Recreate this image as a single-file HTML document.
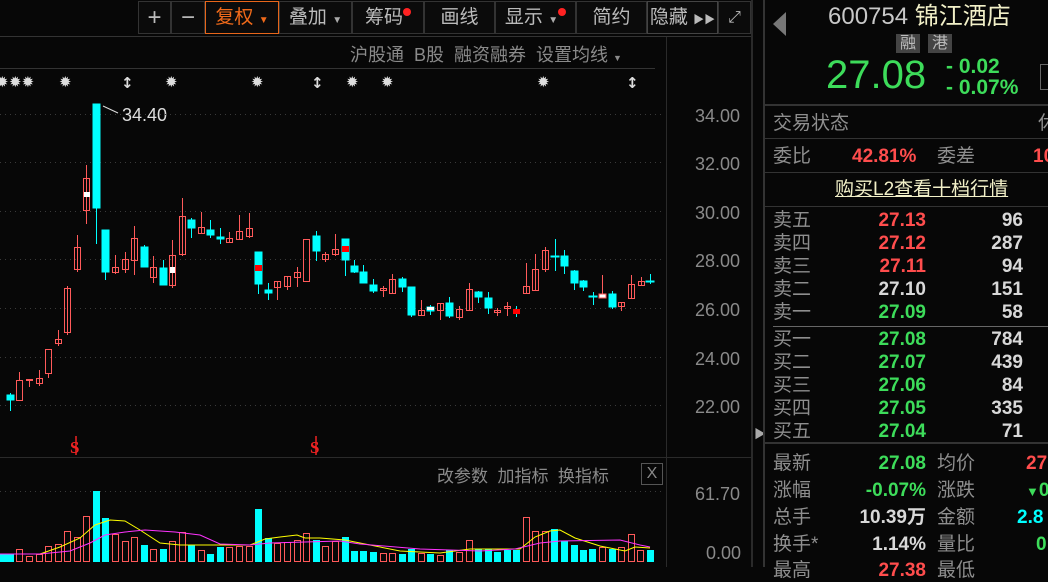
<!DOCTYPE html>
<html><head><meta charset="utf-8"><style>
*{margin:0;padding:0;box-sizing:border-box}
body{width:1048px;height:567px;background:#070707;overflow:hidden;position:relative;font-family:"Liberation Sans","Noto Sans CJK SC",sans-serif;color:#999}
.a{position:absolute;white-space:nowrap}
.btn{position:absolute;top:1px;height:33px;border:1px solid #333;color:#bbb;font-size:19px;line-height:31px;text-align:center;background:#0b0b0b}
.rt{position:absolute;white-space:nowrap;font-size:19px;line-height:22px}
.lab{color:#8e8e8e}
.num{font-weight:bold;text-align:right}
.g{color:#3ddc5a}.r{color:#ff4d4d}.w{color:#d8d8d8}
.hl{position:absolute;left:765px;width:283px;height:2px;background:#333}
</style></head><body>
<div class="btn" style="left:138px;width:33px;font-size:24px">+</div>
<div class="btn" style="left:171px;width:34px;font-size:24px">−</div>
<div class="btn" style="left:205px;width:74px;border-color:#e8661a;color:#f06a1a">复权 <span style="font-size:10px">▼</span></div>
<div class="btn" style="left:279px;width:73px">叠加 <span style="font-size:10px;color:#aaa">▼</span></div>
<div class="btn" style="left:352px;width:72px">筹码<span style="display:inline-block;width:8px;height:8px;border-radius:4px;background:#f22;vertical-align:top;margin-top:6px"></span></div>
<div class="btn" style="left:424px;width:71px">画线</div>
<div class="btn" style="left:495px;width:81px">显示 <span style="font-size:10px;color:#aaa">▼</span><span style="display:inline-block;width:8px;height:8px;border-radius:4px;background:#f22;vertical-align:top;margin-top:6px"></span></div>
<div class="btn" style="left:576px;width:71px">简约</div>
<div class="btn" style="left:647px;width:71px;border-color:#444">隐藏 <span style="font-size:11px">▶▶</span></div>
<div class="btn" style="left:718px;width:33px;font-size:16px">⤢</div>
<div class="a" style="left:0;top:36px;width:752px;height:1px;background:#333"></div>
<div class="a" style="left:350px;top:41px;font-size:18px;color:#8a8a8a">沪股通&nbsp;&nbsp;B股&nbsp;&nbsp;融资融券&nbsp;&nbsp;设置均线 <span style="font-size:9px">▼</span></div>
<div class="a" style="left:0;top:68px;width:655px;height:1px;background:#333"></div>
<div class="a" style="left:666px;top:37px;width:1px;height:530px;background:#2a2a2a"></div>
<div class="a" style="left:751px;top:0;width:2px;height:567px;background:#2a2a2a"></div>
<div class="a" style="left:754px;top:425px;color:#aaa;font-size:12px">▶</div>
<div class="a" style="left:0;top:457px;width:752px;height:1px;background:#2a2a2a"></div>
<div class="a" style="left:695px;top:105px;font-size:18px;color:#8a8a8a;line-height:22px">34.00</div>
<div class="a" style="left:695px;top:153px;font-size:18px;color:#8a8a8a;line-height:22px">32.00</div>
<div class="a" style="left:695px;top:202px;font-size:18px;color:#8a8a8a;line-height:22px">30.00</div>
<div class="a" style="left:695px;top:250px;font-size:18px;color:#8a8a8a;line-height:22px">28.00</div>
<div class="a" style="left:695px;top:299px;font-size:18px;color:#8a8a8a;line-height:22px">26.00</div>
<div class="a" style="left:695px;top:348px;font-size:18px;color:#8a8a8a;line-height:22px">24.00</div>
<div class="a" style="left:695px;top:396px;font-size:18px;color:#8a8a8a;line-height:22px">22.00</div>
<div class="a" style="left:695px;top:483px;font-size:18px;color:#8a8a8a;line-height:22px">61.70</div>
<div class="a" style="left:706px;top:542px;font-size:18px;color:#8a8a8a;line-height:22px">0.00</div>
<div class="a" style="left:122px;top:104px;font-size:18px;color:#ddd;line-height:22px">34.40</div>
<div class="a" style="left:437px;top:462px;font-size:17px;color:#8a8a8a">改参数&nbsp;&nbsp;加指标&nbsp;&nbsp;换指标</div>
<div class="a" style="left:641px;top:463px;width:22px;height:22px;border:1px solid #555;color:#888;font-size:16px;text-align:center;line-height:20px">X</div>
<svg class="a" style="left:0;top:0" width="752" height="567">
<g stroke="#3a3a3a" stroke-dasharray="1 4">
<line x1="0" y1="114.5" x2="665" y2="114.5"/><line x1="0" y1="162.5" x2="665" y2="162.5"/><line x1="0" y1="211.5" x2="665" y2="211.5"/><line x1="0" y1="259.5" x2="665" y2="259.5"/><line x1="0" y1="308.5" x2="665" y2="308.5"/><line x1="0" y1="357.5" x2="665" y2="357.5"/><line x1="0" y1="405.5" x2="665" y2="405.5"/><line x1="0" y1="491.5" x2="665" y2="491.5"/>
</g>
<g fill="#ddd" font-size="15" font-family="DejaVu Sans" font-weight="bold">
<text x="-4" y="87">✹</text><text x="9" y="87">✹✹</text><text x="59" y="87">✹</text><text x="165" y="87">✹</text><text x="251" y="87">✹</text><text x="346" y="87">✹</text><text x="381" y="87">✹</text><text x="537" y="87">✹</text>
<text x="121" y="88">↕</text><text x="311" y="88">↕</text><text x="626" y="88">↕</text>
</g>
<g fill="#e22" font-size="17" font-weight="bold" font-family="Liberation Serif"><text x="70" y="453">S</text><text x="310" y="453">S</text></g>
<g stroke="#e22" stroke-width="1.5"><line x1="76" y1="436" x2="76" y2="455"/><line x1="316" y1="436" x2="316" y2="455"/></g>
<line x1="103" y1="106" x2="118" y2="113" stroke="#ddd"/>
<g stroke="#00ffff" fill="#00ffff">
<line x1="10.5" y1="393" x2="10.5" y2="411"/><rect x="7" y="395" width="7" height="5"/>
<line x1="96.5" y1="104" x2="96.5" y2="244"/><rect x="93" y="104" width="7" height="104"/>
<line x1="105.5" y1="230" x2="105.5" y2="280"/><rect x="102" y="230" width="7" height="42"/>
<line x1="144.5" y1="245" x2="144.5" y2="267"/><rect x="141" y="247" width="7" height="20"/>
<line x1="163.5" y1="260" x2="163.5" y2="285"/><rect x="160" y="268" width="7" height="17"/>
<line x1="191.5" y1="218" x2="191.5" y2="238"/><rect x="188" y="220" width="7" height="8"/>
<line x1="210.5" y1="220" x2="210.5" y2="238"/><rect x="207" y="230" width="7" height="5"/>
<line x1="220.5" y1="228" x2="220.5" y2="244"/><rect x="217" y="237" width="7" height="2"/>
<line x1="258.5" y1="252" x2="258.5" y2="294"/><rect x="255" y="252" width="7" height="32"/>
<line x1="268.5" y1="283" x2="268.5" y2="300"/><rect x="265" y="290" width="7" height="3"/>
<line x1="316.5" y1="231" x2="316.5" y2="261"/><rect x="313" y="236" width="7" height="15"/>
<line x1="345.5" y1="239" x2="345.5" y2="276"/><rect x="342" y="239" width="7" height="21"/>
<line x1="354.5" y1="260" x2="354.5" y2="273"/><rect x="351" y="266" width="7" height="6"/>
<line x1="363.5" y1="265" x2="363.5" y2="283"/><rect x="360" y="272" width="7" height="11"/>
<line x1="373.5" y1="279" x2="373.5" y2="293"/><rect x="370" y="285" width="7" height="6"/>
<line x1="402.5" y1="277" x2="402.5" y2="292"/><rect x="399" y="279" width="7" height="8"/>
<line x1="411.5" y1="287" x2="411.5" y2="317"/><rect x="408" y="287" width="7" height="28"/>
<line x1="430.5" y1="305" x2="430.5" y2="315"/><rect x="427" y="307" width="7" height="4"/>
<line x1="449.5" y1="297" x2="449.5" y2="318"/><rect x="446" y="303" width="7" height="13"/>
<line x1="478.5" y1="291" x2="478.5" y2="303"/><rect x="475" y="292" width="7" height="5"/>
<line x1="488.5" y1="292" x2="488.5" y2="314"/><rect x="485" y="298" width="7" height="10"/>
<line x1="516.5" y1="306" x2="516.5" y2="317"/>
<line x1="555.5" y1="239" x2="555.5" y2="271"/><rect x="551" y="256" width="8" height="1"/>
<line x1="564.5" y1="250" x2="564.5" y2="274"/><rect x="561" y="256" width="7" height="10"/>
<line x1="574.5" y1="270" x2="574.5" y2="290"/><rect x="571" y="271" width="7" height="12"/>
<line x1="583.5" y1="280" x2="583.5" y2="291"/><rect x="580" y="281" width="7" height="6"/>
<line x1="593.5" y1="292" x2="593.5" y2="305"/><rect x="589" y="296" width="8" height="1"/>
<line x1="612.5" y1="291" x2="612.5" y2="309"/><rect x="609" y="294" width="7" height="13"/>
<line x1="650.5" y1="274" x2="650.5" y2="284"/><rect x="646" y="281" width="8" height="1"/>
</g>
<g stroke="#ff5a5a" fill="none">
<line x1="19.5" y1="372" x2="19.5" y2="380"/><rect x="16.5" y="380.5" width="6" height="20"/>
<line x1="29.5" y1="379" x2="29.5" y2="387"/><rect x="26.5" y="379.5" width="6" height="1"/>
<line x1="39.5" y1="370" x2="39.5" y2="386"/><rect x="36.5" y="378.5" width="6" height="5"/>
<line x1="48.5" y1="373" x2="48.5" y2="378"/><rect x="45.5" y="349.5" width="6" height="24"/>
<line x1="58.5" y1="330" x2="58.5" y2="346"/><rect x="55.5" y="339.5" width="6" height="4"/>
<line x1="67.5" y1="286" x2="67.5" y2="335"/><rect x="64.5" y="288.5" width="6" height="44"/>
<line x1="77.5" y1="235" x2="77.5" y2="272"/><rect x="74.5" y="247.5" width="6" height="22"/>
<line x1="86.5" y1="165" x2="86.5" y2="224"/><rect x="83.5" y="178.5" width="6" height="32"/>
<line x1="115.5" y1="255" x2="115.5" y2="274"/><rect x="112.5" y="267.5" width="6" height="5"/>
<line x1="125.5" y1="252" x2="125.5" y2="273"/><rect x="122.5" y="259.5" width="6" height="10"/>
<line x1="134.5" y1="226" x2="134.5" y2="275"/><rect x="131.5" y="238.5" width="6" height="22"/>
<line x1="153.5" y1="256" x2="153.5" y2="283"/><rect x="150.5" y="267.5" width="6" height="10"/>
<line x1="172.5" y1="240" x2="172.5" y2="288"/><rect x="169.5" y="255.5" width="6" height="30"/>
<line x1="182.5" y1="198" x2="182.5" y2="256"/><rect x="179.5" y="216.5" width="6" height="38"/>
<line x1="201.5" y1="212" x2="201.5" y2="233"/><rect x="198.5" y="227.5" width="6" height="6"/>
<line x1="229.5" y1="232" x2="229.5" y2="242"/><rect x="226.5" y="238.5" width="6" height="4"/>
<line x1="239.5" y1="215" x2="239.5" y2="240"/><rect x="236.5" y="231.5" width="6" height="8"/>
<line x1="249.5" y1="213" x2="249.5" y2="238"/><rect x="246.5" y="228.5" width="6" height="8"/>
<line x1="277.5" y1="281" x2="277.5" y2="300"/><rect x="274.5" y="281.5" width="6" height="6"/>
<line x1="287.5" y1="276" x2="287.5" y2="290"/><rect x="284.5" y="276.5" width="6" height="10"/>
<line x1="297.5" y1="267" x2="297.5" y2="287"/><rect x="294.5" y="272.5" width="6" height="5"/>
<rect x="303.5" y="239.5" width="6" height="42"/>
<line x1="325.5" y1="252" x2="325.5" y2="262"/><rect x="322.5" y="254.5" width="6" height="5"/>
<line x1="335.5" y1="234" x2="335.5" y2="256"/><rect x="332.5" y="249.5" width="6" height="5"/>
<line x1="383.5" y1="286" x2="383.5" y2="297"/><rect x="380.5" y="288.5" width="6" height="2"/>
<line x1="392.5" y1="274" x2="392.5" y2="293"/><rect x="389.5" y="279.5" width="6" height="14"/>
<line x1="421.5" y1="300" x2="421.5" y2="316"/><rect x="418.5" y="310.5" width="6" height="5"/>
<line x1="440.5" y1="303" x2="440.5" y2="320"/><rect x="437.5" y="303.5" width="6" height="7"/>
<line x1="459.5" y1="306" x2="459.5" y2="320"/><rect x="456.5" y="309.5" width="6" height="8"/>
<line x1="469.5" y1="283" x2="469.5" y2="311"/><rect x="466.5" y="289.5" width="6" height="21"/>
<line x1="497.5" y1="308" x2="497.5" y2="316"/><rect x="494.5" y="310.5" width="6" height="2"/>
<line x1="507.5" y1="302" x2="507.5" y2="316"/><rect x="504.5" y="306.5" width="6" height="2"/>
<line x1="526.5" y1="263" x2="526.5" y2="293"/><rect x="523.5" y="286.5" width="6" height="7"/>
<line x1="535.5" y1="254" x2="535.5" y2="290"/><rect x="532.5" y="269.5" width="6" height="21"/>
<line x1="545.5" y1="247" x2="545.5" y2="272"/><rect x="542.5" y="250.5" width="6" height="19"/>
<line x1="602.5" y1="275" x2="602.5" y2="298"/>
<line x1="621.5" y1="302" x2="621.5" y2="311"/><rect x="618.5" y="302.5" width="6" height="4"/>
<line x1="631.5" y1="275" x2="631.5" y2="298"/><rect x="628.5" y="284.5" width="6" height="14"/>
<line x1="641.5" y1="277" x2="641.5" y2="286"/><rect x="638.5" y="281.5" width="6" height="4"/>
</g>
<g fill="#fff"><rect x="84" y="192" width="6" height="5"/><rect x="170" y="267" width="5" height="6"/><rect x="599" y="294" width="7" height="4" stroke="#ff5a5a"/><rect x="427" y="307" width="7" height="3"/></g>
<g fill="#f00"><rect x="255" y="265" width="7" height="6"/><rect x="342" y="246" width="7" height="6"/><rect x="513" y="309" width="7" height="5"/></g>
<g fill="#00ffff">
<rect x="0" y="554" width="7" height="8"/><rect x="7" y="554" width="7" height="8"/><rect x="93" y="491" width="7" height="71"/><rect x="102" y="518" width="7" height="44"/><rect x="141" y="545" width="7" height="17"/><rect x="160" y="549" width="7" height="13"/><rect x="188" y="545" width="7" height="17"/><rect x="207" y="554" width="7" height="8"/><rect x="217" y="547" width="7" height="15"/><rect x="255" y="509" width="7" height="53"/><rect x="265" y="538" width="7" height="24"/><rect x="313" y="540" width="7" height="22"/><rect x="342" y="537" width="7" height="25"/><rect x="351" y="551" width="7" height="11"/><rect x="360" y="551" width="7" height="11"/><rect x="370" y="552" width="7" height="10"/><rect x="399" y="554" width="7" height="8"/><rect x="408" y="549" width="7" height="13"/><rect x="427" y="554" width="7" height="8"/><rect x="446" y="550" width="7" height="12"/><rect x="475" y="549" width="7" height="13"/><rect x="485" y="549" width="7" height="13"/><rect x="494" y="552" width="7" height="10"/><rect x="504" y="550" width="7" height="12"/><rect x="513" y="550" width="7" height="12"/><rect x="551" y="529" width="7" height="33"/><rect x="561" y="541" width="7" height="21"/><rect x="571" y="545" width="7" height="17"/><rect x="580" y="550" width="7" height="12"/><rect x="589" y="549" width="7" height="13"/><rect x="609" y="549" width="7" height="13"/><rect x="647" y="550" width="7" height="12"/>
</g>
<g stroke="#ff5a5a" fill="none">
<rect x="16.5" y="549.5" width="6" height="12"/><rect x="26.5" y="556.5" width="6" height="5"/><rect x="36.5" y="554.5" width="6" height="7"/><rect x="45.5" y="546.5" width="6" height="15"/><rect x="55.5" y="544.5" width="6" height="17"/><rect x="64.5" y="531.5" width="6" height="30"/><rect x="74.5" y="537.5" width="6" height="24"/><rect x="83.5" y="516.5" width="6" height="45"/><rect x="112.5" y="534.5" width="6" height="27"/><rect x="122.5" y="541.5" width="6" height="20"/><rect x="131.5" y="537.5" width="6" height="24"/><rect x="150.5" y="549.5" width="6" height="12"/><rect x="169.5" y="541.5" width="6" height="20"/><rect x="179.5" y="532.5" width="6" height="29"/><rect x="198.5" y="550.5" width="6" height="11"/><rect x="226.5" y="547.5" width="6" height="14"/><rect x="236.5" y="546.5" width="6" height="15"/><rect x="246.5" y="546.5" width="6" height="15"/><rect x="274.5" y="543.5" width="6" height="18"/><rect x="284.5" y="542.5" width="6" height="19"/><rect x="294.5" y="540.5" width="6" height="21"/><rect x="303.5" y="533.5" width="6" height="28"/><rect x="322.5" y="546.5" width="6" height="15"/><rect x="332.5" y="541.5" width="6" height="20"/><rect x="380.5" y="553.5" width="6" height="8"/><rect x="389.5" y="553.5" width="6" height="8"/><rect x="418.5" y="553.5" width="6" height="8"/><rect x="437.5" y="555.5" width="6" height="6"/><rect x="456.5" y="552.5" width="6" height="9"/><rect x="466.5" y="540.5" width="6" height="21"/><rect x="523.5" y="517.5" width="6" height="44"/><rect x="532.5" y="531.5" width="6" height="30"/><rect x="542.5" y="531.5" width="6" height="30"/><rect x="599.5" y="547.5" width="6" height="14"/><rect x="618.5" y="547.5" width="6" height="14"/><rect x="628.5" y="534.5" width="6" height="27"/><rect x="637.5" y="550.5" width="6" height="11"/>
</g>
<polyline fill="none" stroke="#ffff00" points="0,554 40,554 60,547 80,538 95,525 110,520 125,521 140,530 160,543 180,545 250,545 265,539 280,537 297,535 305,538 320,538 345,540 370,545 400,551 440,553 470,549 500,549 520,549 535,537 550,531 560,530 575,538 600,546 625,551 635,547 650,548"/>
<polyline fill="none" stroke="#ff33ff" points="0,554 40,554 70,551 90,543 105,535 125,532 145,530 175,532 200,535 220,544 250,545 270,543 340,541 360,544 420,549 480,551 515,549 540,543 560,541 620,540 640,545 650,547"/>
</svg>
<div class="a" style="left:763px;top:0;width:2px;height:567px;background:#333"></div>
<div class="a" style="left:773px;top:12px;width:0;height:0;border-top:12px solid transparent;border-bottom:12px solid transparent;border-right:13px solid #777"></div>
<div class="a" style="left:828px;top:2px;font-size:24px;line-height:30px;color:#c8c8c8">600754 <span style="color:#f2f0c8">锦江酒店</span></div>
<div class="a" style="left:896px;top:34px;width:24px;height:19px;background:#444;color:#bbb;font-size:16px;line-height:19px;text-align:center">融</div>
<div class="a" style="left:928px;top:34px;width:24px;height:19px;background:#444;color:#bbb;font-size:16px;line-height:19px;text-align:center">港</div>
<div class="a g" style="left:826px;top:53px;font-size:40px;line-height:44px">27.08</div>
<div class="a g" style="left:946px;top:56px;font-size:21px;line-height:21px;font-weight:bold">- 0.02</div>
<div class="a g" style="left:946px;top:77px;font-size:21px;line-height:21px;font-weight:bold">- 0.07%</div>
<div class="a" style="left:1040px;top:64px;width:10px;height:26px;border:1px solid #666"></div>
<div class="hl" style="top:104px"></div>
<div class="rt lab" style="left:773px;top:113px">交易状态</div>
<div class="rt lab" style="left:1038px;top:113px">休</div>
<div class="hl" style="top:138px;height:1px"></div>
<div class="rt lab" style="left:773px;top:146px">委比</div>
<div class="rt r num" style="left:852px;top:146px">42.81%</div>
<div class="rt lab" style="left:937px;top:146px">委差</div>
<div class="rt r num" style="left:1033px;top:146px">10</div>
<div class="hl" style="top:172px;height:1px"></div>
<div class="rt" style="left:835px;top:179px;color:#f2f0c8;text-decoration:underline">购买L2查看十档行情</div>
<div class="hl" style="top:206px;height:1px"></div>
<div class="rt lab" style="left:773px;top:210px">卖五</div><div class="rt r num" style="left:845px;top:210px;width:81px">27.13</div><div class="rt w num" style="left:960px;top:210px;width:63px">96</div>
<div class="rt lab" style="left:773px;top:233px">卖四</div><div class="rt r num" style="left:845px;top:233px;width:81px">27.12</div><div class="rt w num" style="left:960px;top:233px;width:63px">287</div>
<div class="rt lab" style="left:773px;top:256px">卖三</div><div class="rt r num" style="left:845px;top:256px;width:81px">27.11</div><div class="rt w num" style="left:960px;top:256px;width:63px">94</div>
<div class="rt lab" style="left:773px;top:279px">卖二</div><div class="rt w num" style="left:845px;top:279px;width:81px">27.10</div><div class="rt w num" style="left:960px;top:279px;width:63px">151</div>
<div class="rt lab" style="left:773px;top:302px">卖一</div><div class="rt g num" style="left:845px;top:302px;width:81px">27.09</div><div class="rt w num" style="left:960px;top:302px;width:63px">58</div>
<div class="a" style="left:773px;top:326px;width:275px;height:1px;background:#666"></div>
<div class="rt lab" style="left:773px;top:329px">买一</div><div class="rt g num" style="left:845px;top:329px;width:81px">27.08</div><div class="rt w num" style="left:960px;top:329px;width:63px">784</div>
<div class="rt lab" style="left:773px;top:352px">买二</div><div class="rt g num" style="left:845px;top:352px;width:81px">27.07</div><div class="rt w num" style="left:960px;top:352px;width:63px">439</div>
<div class="rt lab" style="left:773px;top:375px">买三</div><div class="rt g num" style="left:845px;top:375px;width:81px">27.06</div><div class="rt w num" style="left:960px;top:375px;width:63px">84</div>
<div class="rt lab" style="left:773px;top:398px">买四</div><div class="rt g num" style="left:845px;top:398px;width:81px">27.05</div><div class="rt w num" style="left:960px;top:398px;width:63px">335</div>
<div class="rt lab" style="left:773px;top:421px">买五</div><div class="rt g num" style="left:845px;top:421px;width:81px">27.04</div><div class="rt w num" style="left:960px;top:421px;width:63px">71</div>
<div class="hl" style="top:442px"></div>
<div class="rt lab" style="left:773px;top:453px">最新</div><div class="rt g num" style="left:825px;top:453px;width:101px">27.08</div><div class="rt lab" style="left:937px;top:453px">均价</div><div class="rt r num" style="left:1026px;top:453px">27</div>
<div class="rt lab" style="left:773px;top:480px">涨幅</div><div class="rt g num" style="left:825px;top:480px;width:101px">-0.07%</div><div class="rt lab" style="left:937px;top:480px">涨跌</div><div class="rt g num" style="left:1026px;top:480px"><span style="font-size:13px">▼</span>0</div>
<div class="rt lab" style="left:773px;top:507px">总手</div><div class="rt w num" style="left:825px;top:507px;width:101px">10.39万</div><div class="rt lab" style="left:937px;top:507px">金额</div><div class="rt num" style="left:1017px;top:507px;color:#0ff">2.8</div>
<div class="rt lab" style="left:773px;top:534px">换手*</div><div class="rt w num" style="left:825px;top:534px;width:101px">1.14%</div><div class="rt lab" style="left:937px;top:534px">量比</div><div class="rt g num" style="left:1036px;top:534px">0</div>
<div class="rt lab" style="left:773px;top:560px">最高</div><div class="rt r num" style="left:825px;top:560px;width:101px">27.38</div><div class="rt lab" style="left:937px;top:560px">最低</div>
</body></html>
